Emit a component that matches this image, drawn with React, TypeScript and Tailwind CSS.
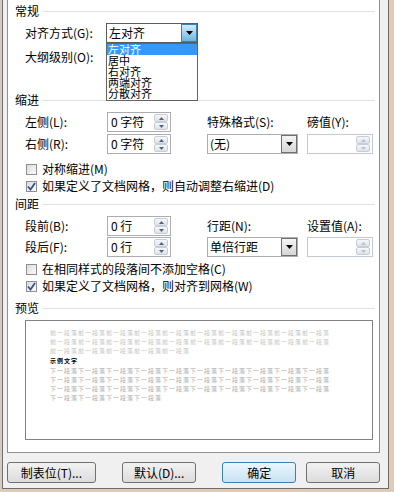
import React from "react";

const font = "font-['Noto_Sans_CJK_SC','Noto_Sans',sans-serif]";

function Arrow({ up = false, color = "#000", w = 7, h = 4 }: { up?: boolean; color?: string; w?: number; h?: number }) {
  return (
    <svg width={w} height={h} viewBox={`0 0 ${w} ${h}`}>
      {up ? (
        <polygon points={`0,${h} ${w},${h} ${w / 2},0`} fill={color} />
      ) : (
        <polygon points={`0,0 ${w},0 ${w / 2},${h}`} fill={color} />
      )}
    </svg>
  );
}

function SpinBtns({ disabled = false }: { disabled?: boolean }) {
  const c = disabled ? "#b8c2cc" : "#4d6185";
  return (
    <div className="flex flex-col w-[14px] h-[16px] mr-[2px] gap-0">
      <div className="flex-1 flex items-center justify-center border border-[#c8cdd4] rounded-[2px] bg-gradient-to-b from-[#f6f8fa] to-[#dde3ea]">
        <Arrow up color={c} w={5} h={3} />
      </div>
      <div className="flex-1 flex items-center justify-center border border-[#c8cdd4] rounded-[2px] bg-gradient-to-b from-[#f6f8fa] to-[#dde3ea]">
        <Arrow color={c} w={5} h={3} />
      </div>
    </div>
  );
}

function Spinner({ value, w, disabled = false }: { value: string; w: string; disabled?: boolean }) {
  return (
    <div className={`${w} h-[20px] flex items-center border ${disabled ? "border-[#c5cad0]" : "border-[#abadb3]"} bg-white`}>
      <div className="flex-1 pl-[3px] text-[12px] leading-[14px] whitespace-pre">{value}</div>
      <SpinBtns disabled={disabled} />
    </div>
  );
}

function Combo({ value, w, open = false }: { value: string; w: string; open?: boolean }) {
  return (
    <div className={`${w} h-[20px] flex items-center border ${open ? "border-[#5c5c5c]" : "border-[#abadb3]"} bg-white`}>
      <div className="flex-1 pl-[2px] text-[12px] leading-[14px] whitespace-pre">{value}</div>
      {open ? (
        <div className="w-[16px] h-[18px] flex items-center justify-center border border-[#3c7fb1] bg-gradient-to-b from-[#d4ecfb] to-[#6cb6e0]">
          <Arrow w={7} h={4} />
        </div>
      ) : (
        <div className="w-[16px] h-[18px] flex items-center justify-center border border-[#707070] bg-gradient-to-b from-[#f4f4f4] to-[#d6d6d6]">
          <Arrow w={7} h={4} />
        </div>
      )}
    </div>
  );
}

function Check({ checked, label, mt }: { checked: boolean; label: string; mt: string }) {
  return (
    <div className={`${mt} h-[16px] flex items-center pl-[18px]`}>
      <div className="w-[11px] h-[11px] border border-[#8e8f8f] bg-gradient-to-br from-[#dcdcdc] to-[#fbfbfb] flex items-center justify-center">
        {checked && (
          <svg width="9" height="9" viewBox="0 0 9 9">
            <path d="M1 4.5 L3.5 7.5 L8 1" stroke="#3a4f8a" strokeWidth="1.8" fill="none" />
          </svg>
        )}
      </div>
      <div className="ml-[5px] text-[12px] leading-[14px] whitespace-pre">{label}</div>
    </div>
  );
}

function Header({ text, mt }: { text: string; mt: string }) {
  return (
    <div className={`${mt} h-[14px] flex items-center pl-[7px] pr-[4px]`}>
      <div className="text-[12px] leading-[14px]">{text}</div>
      <div className="flex-1 ml-[4px] h-px bg-[#dde1e4]" />
    </div>
  );
}

function Button({ label, w, def = false, ml }: { label: string; w: string; def?: boolean; ml: string }) {
  return (
    <div
      className={`${w} ${ml} h-[21px] rounded-[3px] border ${
        def ? "border-[#3c7fb1] bg-gradient-to-b from-[#eaf6fd] to-[#c9e3f3]" : "border-[#707070] bg-gradient-to-b from-[#f2f2f2] to-[#dcdcdc]"
      } flex items-center justify-center text-[12px] leading-[14px]`}
    >
      {label}
    </div>
  );
}

const prev = "前一段落".repeat(10);
const next = "下一段落".repeat(10);

function PLine({ text, color }: { text: string; color: string }) {
  return (
    <div className={`h-[9px] whitespace-nowrap text-[6px] leading-[9px] tracking-[1px] ${color}`}>{text}</div>
  );
}

const item = "h-[11px] leading-[11px] text-[11px] pl-[1px] whitespace-nowrap";

export default function App() {
  return (
    <div className={`w-[394px] h-[492px] flex flex-col bg-[#e3cbb3] text-black ${font}`}>
      <div className="flex h-[489px]">
        <div className="w-[2px] bg-[#d4ccc4]" />
        <div className="w-[387px] h-[489px] bg-[#f0f0f0] border-x border-b border-[#6e6e6e] flex flex-col pl-[4px] pr-[8px]">
          {/* panel */}
          <div className="w-[373px] h-[453px] bg-white border-x border-b border-[#8e9096] flex flex-col">
            <Header text="常规" mt="mt-[4px]" />
            {/* 对齐方式 */}
            <div className="mt-[5px] h-[20px] flex items-center pl-[17px]">
              <div className="w-[81px] text-[12px] leading-[14px]">对齐方式(G):</div>
              <div className="relative">
                <Combo value="左对齐" w="w-[92px]" open />
                <div className="absolute left-0 top-[20px] w-[92px] h-[58px] border border-[#646464] bg-white z-10 flex flex-col">
                  <div className={`${item} bg-[#3399ff] text-white`}>左对齐</div>
                  <div className={item}>居中</div>
                  <div className={item}>右对齐</div>
                  <div className={item}>两端对齐</div>
                  <div className={item}>分散对齐</div>
                </div>
              </div>
            </div>
            {/* 大纲级别 */}
            <div className="mt-[4px] h-[20px] flex items-center pl-[17px]">
              <div className="w-[81px] text-[12px] leading-[14px]">大纲级别(O):</div>
            </div>
            <Header text="缩进" mt="mt-[26px]" />
            {/* 左侧 */}
            <div className="mt-[5px] h-[20px] flex items-center pl-[17px]">
              <div className="w-[82px] text-[12px] leading-[14px]">左侧(L):</div>
              <Spinner value="0 字符" w="w-[64px]" />
              <div className="w-[36px]" />
              <div className="w-[100px] text-[12px] leading-[14px]">特殊格式(S):</div>
              <div className="text-[12px] leading-[14px]">磅值(Y):</div>
            </div>
            {/* 右侧 */}
            <div className="mt-[2px] h-[20px] flex items-center pl-[17px]">
              <div className="w-[82px] text-[12px] leading-[14px]">右侧(R):</div>
              <Spinner value="0 字符" w="w-[64px]" />
              <div className="w-[36px]" />
              <Combo value="(无)" w="w-[91px]" />
              <div className="w-[9px]" />
              <Spinner value="" w="w-[66px]" disabled />
            </div>
            <Check checked={false} label="对称缩进(M)" mt="mt-[7px]" />
            <Check checked label="如果定义了文档网格，则自动调整右缩进(D)" mt="mt-[1px]" />
            <Header text="间距" mt="mt-[3px]" />
            {/* 段前 */}
            <div className="mt-[5px] h-[20px] flex items-center pl-[17px]">
              <div className="w-[82px] text-[12px] leading-[14px]">段前(B):</div>
              <Spinner value="0 行" w="w-[64px]" />
              <div className="w-[36px]" />
              <div className="w-[100px] text-[12px] leading-[14px]">行距(N):</div>
              <div className="text-[12px] leading-[14px]">设置值(A):</div>
            </div>
            {/* 段后 */}
            <div className="mt-[1px] h-[20px] flex items-center pl-[17px]">
              <div className="w-[82px] text-[12px] leading-[14px]">段后(F):</div>
              <Spinner value="0 行" w="w-[64px]" />
              <div className="w-[36px]" />
              <Combo value="单倍行距" w="w-[91px]" />
              <div className="w-[9px]" />
              <Spinner value="" w="w-[66px]" disabled />
            </div>
            <Check checked={false} label="在相同样式的段落间不添加空格(C)" mt="mt-[4px]" />
            <Check checked label="如果定义了文档网格，则对齐到网格(W)" mt="mt-[1px]" />
            <Header text="预览" mt="mt-[7px]" />
            {/* preview */}
            <div className="mt-[5px] ml-[17px] w-[348px] h-[120px] border border-[#828282] bg-white pl-[24px] pt-[7px] flex flex-col">
              <PLine text={prev} color="text-[#c4c4c4]" />
              <PLine text={prev} color="text-[#c4c4c4]" />
              <PLine text={prev.slice(0, 20)} color="text-[#c4c4c4]" />
              <div className="mt-[1px] h-[10px] text-[6px] leading-[10px] tracking-[1px] text-black font-bold">示例文字</div>
              <PLine text={next} color="text-[#aaaaaa]" />
              <PLine text={next} color="text-[#aaaaaa]" />
              <PLine text={next} color="text-[#aaaaaa]" />
              <PLine text={next.slice(0, 16)} color="text-[#aaaaaa]" />
            </div>
          </div>
          {/* buttons */}
          <div className="mt-[9px] flex">
            <Button label="制表位(T)..." w="w-[89px]" ml="ml-0" />
            <Button label="默认(D)..." w="w-[75px]" ml="ml-[26px]" />
            <Button label="确定" w="w-[74px]" ml="ml-[26px]" def />
            <Button label="取消" w="w-[74px]" ml="ml-[10px]" />
          </div>
        </div>
        <div className="flex-1 bg-[#e3cbb3]" />
      </div>
    </div>
  );
}
